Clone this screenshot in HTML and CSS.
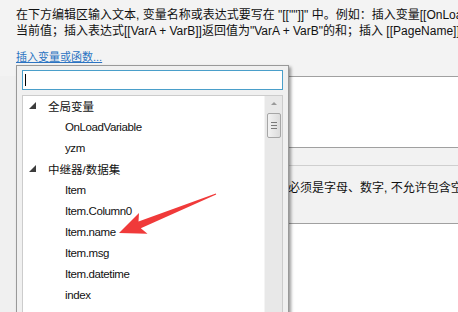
FILE: index.html
```html
<!DOCTYPE html>
<html lang="zh-CN">
<head>
    <meta charset="UTF-8">
    <meta name="viewport" content="width=device-width, initial-scale=1.0">
    <title>编辑文本</title>
    <link rel="stylesheet" href="styles.css">
</head>
<body>
    <div class="dialog">
        <div class="top">
            <p class="hint">在下方编辑区输入文本, 变量名称或表达式要写在 "[[""]]" 中。例如：插入变量[[OnLoadVariable]]返回值为变量"OnLoadVariable"的<br>当前值；插入表达式[[VarA + VarB]]返回值为"VarA + VarB"的和；插入 [[PageName]] 返回值为当前页面名称。</p>
            <a class="insert-link" href="#">插入变量或函数...</a>
        </div>
        <div class="editor"></div>
        <div class="section-head"></div>
        <div class="section-body">
            <span class="note">必须是字母、数字, 不允许包含空格和特殊字符。</span>
        </div>
        <div class="bottom"></div>
    </div>

    <div class="picker">
        <div class="search"><span class="caret"></span></div>
        <div class="tree">
            <ul class="tree-list">
                <li class="group"><svg class="toggle" width="7" height="7" viewBox="0 0 7 7"><polygon points="7,0 7,7 0,7"/></svg>全局变量</li>
                <li class="leaf">OnLoadVariable</li>
                <li class="leaf">yzm</li>
                <li class="group"><svg class="toggle" width="7" height="7" viewBox="0 0 7 7"><polygon points="7,0 7,7 0,7"/></svg>中继器/数据集</li>
                <li class="leaf">Item</li>
                <li class="leaf">Item.Column0</li>
                <li class="leaf">Item.name</li>
                <li class="leaf">Item.msg</li>
                <li class="leaf">Item.datetime</li>
                <li class="leaf">index</li>
                <li class="leaf">repeater</li>
            </ul>
            <div class="scrollbar">
                <span class="arrow-up"></span>
                <span class="thumb"><i></i><i></i><i></i></span>
            </div>
        </div>
    </div>

    <!-- 标注箭头 -->
    <svg class="mark" width="458" height="312" viewBox="0 0 458 312">
        <polygon points="119,233 139,213 138.5,221.5 215.8,193.4 216.2,194.6 140.8,228.2 147.5,233.8" fill="#f03a3a"/>
    </svg>
</body>
</html>
```

FILE: styles.css
```css
html, body {
    margin: 0;
    padding: 0;
}
body {
    width: 458px;
    height: 312px;
    overflow: hidden;
    position: relative;
    background: #f0f0f0;
    font-family: "Liberation Sans", "Noto Sans CJK SC", sans-serif;
    font-size: 12px;
    color: #111111;
}
.dialog {
    display: flex;
    flex-direction: column;
    height: 100%;
}
.top {
    height: 76px;
    padding: 7px 0 0 16px;
    box-sizing: border-box;
    background: #f3f3f3;
    display: flex;
    flex-direction: column;
    align-items: flex-start;
}
.hint {
    margin: 0;
    line-height: 16px;
    white-space: nowrap;
}
.insert-link {
    margin-top: 10px;
    line-height: 16px;
    font-size: 11px;
    color: #2b73c2;
    text-decoration: underline;
}
.editor {
    margin-left: 16px;
    height: 70px;
    border-top: 1px solid #a0a0a0;
    background: #ffffff;
}
.section-head {
    margin-left: 16px;
    height: 17px;
    border-top: 1px solid #a0a0a0;
    border-bottom: 1px solid #cfcfcf;
    background: #f2f2f2;
}
.section-body {
    margin-left: 16px;
    height: 58px;
    border-bottom: 1px solid #a0a0a0;
    background: #f2f2f2;
    display: flex;
    align-items: center;
    padding-left: 272px;
    padding-bottom: 16px;
    box-sizing: border-box;
    white-space: nowrap;
}
.bottom {
    margin-left: 16px;
    flex: 1;
    background: #ffffff;
}

/* 变量选择弹出框 */
.picker {
    position: absolute;
    left: 16px;
    top: 65px;
    width: 273px;
    height: 300px;
    box-sizing: border-box;
    border: 1px solid #999999;
    background: #f0f0f0;
    padding: 4px 5px 0;
    box-shadow: 2px 2px 3px rgba(0, 0, 0, 0.4);
    display: flex;
    flex-direction: column;
    gap: 5px;
}
.search {
    height: 20px;
    box-sizing: border-box;
    border: 1px solid #4a9fca;
    background: #ffffff;
    padding: 3px 0 0 2px;
}
.caret {
    display: block;
    width: 1px;
    height: 12px;
    background: #000000;
}
.tree {
    flex: 1;
    display: flex;
    border: 1px solid #cccccc;
    border-bottom: none;
    background: #ffffff;
}
.tree-list {
    flex: 1;
    list-style: none;
    margin: -1px 0 0;
    padding: 0;
}
.tree-list li {
    height: 21px;
    display: flex;
    align-items: center;
    white-space: nowrap;
    font-size: 11.5px;
}
.group {
    padding-left: 6px;
}
.toggle {
    fill: #3c3c3c;
    margin-right: 12px;
}
.leaf {
    padding-left: 42px;
    letter-spacing: -0.4px;
}
.scrollbar {
    width: 17px;
    background: #e8e8e8;
    border-left: 1px solid #f4f4f4;
    display: flex;
    flex-direction: column;
    align-items: center;
}
.arrow-up {
    margin-top: 6px;
    width: 0;
    height: 0;
    border-left: 3px solid transparent;
    border-right: 3px solid transparent;
    border-bottom: 3px solid #9a9a9a;
}
.thumb {
    margin-top: 8px;
    width: 12px;
    height: 23px;
    border: 1px solid #a6a6a6;
    border-radius: 2px;
    background: linear-gradient(to right, #f2f2f2, #dcdcdc);
    display: flex;
    flex-direction: column;
    align-items: center;
    justify-content: center;
    gap: 2px;
}
.thumb i {
    display: block;
    width: 6px;
    height: 1px;
    background: #7a7a7a;
}

.mark {
    position: absolute;
    left: 0;
    top: 0;
    pointer-events: none;
}
```
